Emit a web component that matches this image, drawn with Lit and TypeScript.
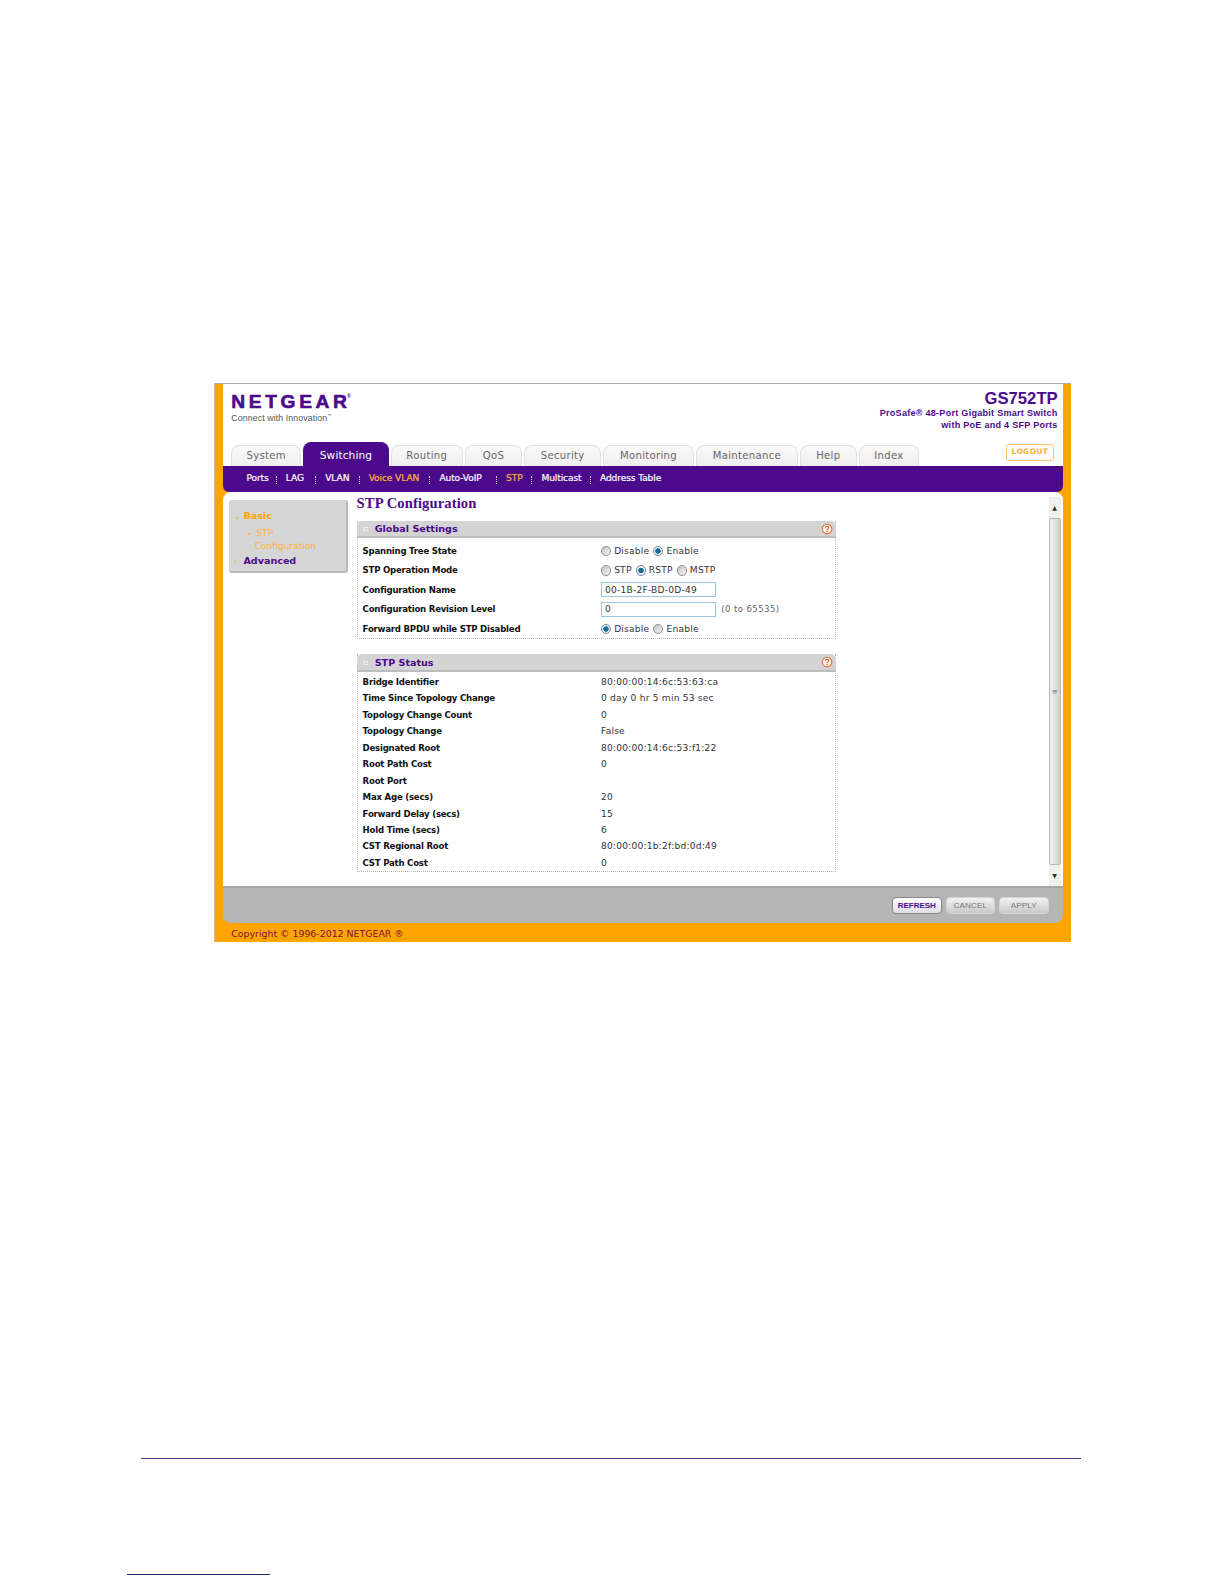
import { LitElement, html, css, svg } from "lit";
import { customElement } from "lit/decorators.js";

const tabs: [string, number, boolean?][] = [
  ["System", 69], ["Switching", 85, true], ["Routing", 71], ["QoS", 57], ["Security", 76],
  ["Monitoring", 90], ["Maintenance", 101], ["Help", 56], ["Index", 60],
];
const subs: [string, number, boolean?][] = [
  ["Ports", 39], ["LAG", 39], ["VLAN", 43], ["Voice VLAN", 70, true], ["Auto-VoIP", 66], ["STP", 35, true], ["Multicast", 58], ["Address Table", 70],
];
const status: [string, string][] = [
  ["Bridge Identifier", "80:00:00:14:6c:53:63:ca"],
  ["Time Since Topology Change", "0 day 0 hr 5 min 53 sec"],
  ["Topology Change Count", "0"],
  ["Topology Change", "False"],
  ["Designated Root", "80:00:00:14:6c:53:f1:22"],
  ["Root Path Cost", "0"],
  ["Root Port", ""],
  ["Max Age (secs)", "20"],
  ["Forward Delay (secs)", "15"],
  ["Hold Time (secs)", "6"],
  ["CST Regional Root", "80:00:00:1b:2f:bd:0d:49"],
  ["CST Path Cost", "0"],
];

const help = svg`<svg class="help" viewBox="0 0 12 12" width="12" height="12"><circle cx="6" cy="6" r="4.8" fill="#fff3e8" stroke="#f0703a" stroke-width="1.1"/><path d="M4.4 4.7C4.5 3.7 5.2 3.2 6 3.2c1 0 1.6.6 1.6 1.4 0 1.2-1.6 1.3-1.6 2.5" fill="none" stroke="#e0562a" stroke-width="1"/><circle cx="6" cy="8.7" r=".65" fill="#e0562a"/></svg>`;

@customElement("app-root")
export class AppRoot extends LitElement {
  static styles = css`
    :host { display: block; zoom: 1.0102; width: 1211px; height: 1567px; background: #fff; font-family: "DejaVu Sans", Verdana, sans-serif; color: #222; overflow: hidden; }
    .frame { margin: 379px 0 0 212px; width: 848px; height: 553px; box-sizing: border-box; background: #ffa500; border-top: 1px solid #a8a8a8; border-left: 1px solid #c9bda0; padding: 0 8px 0 8px; display: flex; flex-direction: column; }
    .head { height: 81px; background: #fff; position: relative; display: flex; justify-content: space-between; padding: 0 5px 0 8px; flex: none; }
    .brand { padding-top: 6px; }
    .logo { font: 900 19px/24px "Liberation Sans", Arial, sans-serif; -webkit-text-stroke: .6px #4b0a8c; color: #4b0a8c; letter-spacing: 3.6px; white-space: nowrap; }
    .logo .last { letter-spacing: 0; }
    .logo sup { font-size: 5px; letter-spacing: 0; vertical-align: 10px; line-height: 0; -webkit-text-stroke: 0; }
    .tag { font: 8.7px/10px "Liberation Sans", Arial, sans-serif; color: #555; margin-top: -1px; letter-spacing: .1px; }
    .tag sup { font-size: 4px; vertical-align: 4px; line-height: 0; }
    .product { text-align: right; color: #4b0a8c; padding-top: 5px; }
    .model { font: bold 16.5px/19px "Liberation Sans", Arial, sans-serif; }
    .desc { font: bold 9px/11.5px "Liberation Sans", Arial, sans-serif; letter-spacing: .25px; }
    .tabs { position: absolute; left: 8px; bottom: 0; display: flex; gap: 2px; height: 20px; align-items: flex-end; }
    .tab { box-sizing: border-box; height: 20px; border: 1px solid #e0e0e0; border-bottom: 0; border-radius: 8px 8px 0 0; background: linear-gradient(#fafafa, #eeeeee); display: flex; align-items: center; justify-content: center; font-size: 10px; color: #666; letter-spacing: .3px; padding-bottom: 2px; }
    .tab.on { height: 23px; background: #4b0a8c; border-color: #4b0a8c; color: #fff; font-size: 10.5px; letter-spacing: .1px; padding: 1px 0 0; }
    .logout { position: absolute; right: 9px; bottom: 5px; width: 47px; height: 16px; box-sizing: border-box; border: 1px solid #ffc766; border-radius: 3px; font-size: 7.5px; font-weight: bold; line-height: 14px; text-align: center; color: #f5b13a; letter-spacing: .3px; }
    .subnav { height: 26px; flex: none; box-sizing: border-box; background: #4b0a8c; border-radius: 0 0 6px 6px; display: flex; align-items: center; padding: 0 0 2px 23px; font-size: 9px; color: #fff; -webkit-text-stroke: .2px currentColor; }
    .sub { position: relative; white-space: nowrap; letter-spacing: -.1px; }
    .sub.on { color: #ffb23c; }
    .sub:not(:last-child)::after { content: ""; position: absolute; right: 9px; top: 3px; height: 8px; border-right: 1px dotted #d8c8e8; }
    .body { flex: 1; background: #fff; border-radius: 8px 8px 0 0; display: flex; min-height: 0; }
    .side { margin: 8px 8px 0 6px; width: 118px; height: 72px; box-sizing: border-box; background: #d6d6d6; border-right: 2px solid #b8b8b8; border-bottom: 2px solid #b8b8b8; border-radius: 3px; padding: 9px 0 0 5px; font-size: 9.5px; font-weight: bold; flex: none; }
    .side div { white-space: nowrap; }
    .basic { color: #ffa500; line-height: 13px; }
    .stp { color: #ffb43c; font-weight: normal; font-size: 9px; line-height: 13px; margin: 4px 0 1px 13px; }
    .stp .cfg { display: block; padding-left: 7px; }
    .adv { color: #4b0a8c; line-height: 13px; }
    .mini { color: #ffa500; font-size: 7px; display: inline-block; width: 9px; font-weight: normal; }
    .main { width: 475px; flex: none; }
    h1 { margin: 3px 0 9px; font: bold 14.5px/17px "Liberation Serif", serif; color: #4b0a8c; letter-spacing: .1px; }
    .panel { border: 1px dotted #b8b8b8; border-top: 0; margin-bottom: 15px; }
    .ph { margin: 0 -1px; height: 17px; box-sizing: border-box; background: #d4d4d4; border-bottom: 2px solid #bdbdbd; border-radius: 5px 5px 0 0; display: flex; align-items: center; padding: 0 3px 0 6px; font-size: 9.5px; font-weight: bold; color: #4b0a8c; }
    .grip { color: #fff; font-size: 7px; width: 12px; letter-spacing: 0; }
    .ph b { flex: 1; }
    .help { display: block; }
    .rows { padding: 3px 0 0 5px; }
    .stat .rows { padding-top: 2px; }
    .row { display: flex; align-items: center; font-size: 8.5px; }
    .global .row { height: 19.2px; }
    .stat .row { height: 16.3px; }
    .rows .lab { width: 236px; font-weight: bold; color: #111; white-space: nowrap; flex: none; letter-spacing: -.22px; }
    .val { display: flex; align-items: center; font-size: 9px; color: #333; letter-spacing: .22px; white-space: nowrap; }
    .radio { width: 10px; height: 10px; box-sizing: border-box; border-radius: 50%; border: 1px solid #8f8f8f; background: linear-gradient(135deg, #c4c4c4, #f4f4f4); margin-right: 3px; display: inline-block; }
    .radio.on { background: radial-gradient(circle, #1c6a94 0 2.4px, #e8f0f4 3px); border-color: #6f8ea0; }
    .opt { margin-right: 4px; }
    input { box-sizing: border-box; width: 114px; height: 15px; border: 1px solid #9cc4e4; padding: 0 3px; font: 9px "DejaVu Sans", sans-serif; color: #333; letter-spacing: .22px; background: #fff; outline: none; }
    .range { margin-left: 5px; font-size: 8.5px; color: #666; letter-spacing: .4px; }
    .bar { margin: 5px 2px 0 auto; width: 12px; background: #f0f0f0; display: flex; flex-direction: column; align-items: center; justify-content: space-between; flex: none; }
    .arr { font-size: 6px; line-height: 21px; height: 21px; color: #333; text-align: center; }
    .thumb { flex: 1; width: 12px; background: linear-gradient(90deg, #f2f2f2, #cfcfcf); border: 1px solid #b8b8b8; border-radius: 2px; box-sizing: border-box; display: flex; align-items: center; justify-content: center; font-size: 7px; color: #666; }
    .foot { height: 37px; flex: none; background: #b5b5b5; border-top: 2px solid #a6a6a6; box-sizing: border-box; border-radius: 0 0 8px 8px; display: flex; justify-content: flex-end; align-items: center; padding: 0 14px 0 0; gap: 4px; }
    .btn { width: 49px; height: 17px; box-sizing: border-box; border-radius: 4px; background: linear-gradient(#f2f2f2, #c9c9c9); border: 1px solid #d4d4d4; font: 8px/15px "Liberation Sans", Arial, sans-serif; text-align: center; color: #777; letter-spacing: .1px; }
    .btn.on { background: linear-gradient(#fff, #e0dfe6); border-color: #888; color: #4b0a8c; font-weight: bold; letter-spacing: -.1px; }
    .copy { height: 18px; flex: none; font-size: 9.3px; line-height: 21px; padding-left: 8px; color: #7a1040; }
    .rule { margin: 511px 0 0 140px; width: 930px; height: 1px; background: #6a2a8c; }
    .rule2 { margin: 114px 0 0 126px; width: 141px; height: 1px; background: #27306b; }
  `;

  private radios(opts: [string, boolean][]) {
    return html`<div class="val">${opts.map(([t, on]) => html`<i class="radio ${on ? "on" : ""}"></i><span class="opt">${t}</span>`)}</div>`;
  }

  render() {
    return html`
      <div class="frame">
        <div class="head">
          <div class="brand">
            <div class="logo">NETGEA<span class="last">R</span><sup>®</sup></div>
            <div class="tag">Connect with Innovation<sup>™</sup></div>
          </div>
          <div class="product">
            <div class="model">GS752TP</div>
            <div class="desc">ProSafe® 48-Port Gigabit Smart Switch<br />with PoE and 4 SFP Ports</div>
          </div>
          <div class="tabs">
            ${tabs.map(([t, w, on]) => html`<div class="tab ${on ? "on" : ""}" style="width:${w}px">${t}</div>`)}
          </div>
          <div class="logout">LOGOUT</div>
        </div>
        <div class="subnav">
          ${subs.map(([t, w, on]) => html`<div class="sub ${on ? "on" : ""}" style="width:${w}px">${t}</div>`)}
        </div>
        <div class="body">
          <div class="side">
            <div class="basic"><span class="mini">⌄</span>Basic</div>
            <div class="stp"><span class="mini">»</span>STP<span class="cfg">Configuration</span></div>
            <div class="adv"><span class="mini">›</span>Advanced</div>
          </div>
          <div class="main">
            <h1>STP Configuration</h1>
            <div class="panel global">
              <div class="ph"><span class="grip">::</span><b>Global Settings</b>${help}</div>
              <div class="rows">
                <div class="row"><span class="lab">Spanning Tree State</span>${this.radios([["Disable", false], ["Enable", true]])}</div>
                <div class="row"><span class="lab">STP Operation Mode</span>${this.radios([["STP", false], ["RSTP", true], ["MSTP", false]])}</div>
                <div class="row"><span class="lab">Configuration Name</span><div class="val"><input value="00-1B-2F-BD-0D-49" /></div></div>
                <div class="row"><span class="lab">Configuration Revision Level</span><div class="val"><input value="0" /><span class="range">(0 to 65535)</span></div></div>
                <div class="row"><span class="lab">Forward BPDU while STP Disabled</span>${this.radios([["Disable", true], ["Enable", false]])}</div>
              </div>
            </div>
            <div class="panel stat">
              <div class="ph"><span class="grip">::</span><b>STP Status</b>${help}</div>
              <div class="rows">
                ${status.map(([l, v]) => html`<div class="row"><span class="lab">${l}</span><div class="val">${v}</div></div>`)}
              </div>
            </div>
          </div>
          <div class="bar">
            <div class="arr">▲</div>
            <div class="thumb">≡</div>
            <div class="arr">▼</div>
          </div>
        </div>
        <div class="foot">
          <div class="btn on">REFRESH</div>
          <div class="btn">CANCEL</div>
          <div class="btn">APPLY</div>
        </div>
        <div class="copy">Copyright © 1996-2012 NETGEAR ®</div>
      </div>
      <div class="rule"></div>
      <div class="rule2"></div>
    `;
  }
}
